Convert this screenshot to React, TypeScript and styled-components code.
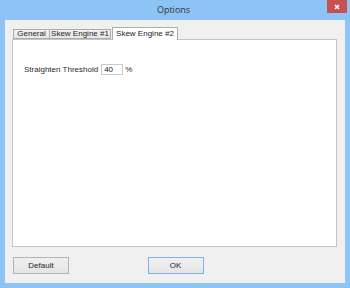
import React from "react";
import styled, { createGlobalStyle } from "styled-components";

const Global = createGlobalStyle`
  html, body { margin: 0; padding: 0; background: #8cc4f5; }
  * { box-sizing: border-box; }
`;

const Window = styled.div`
  width: 350px;
  height: 288px;
  background: #8cc4f5;
  display: flex;
  flex-direction: column;
  font-family: "Liberation Sans", Arial, sans-serif;
`;

const TitleBar = styled.div`
  height: 20px;
  display: grid;
  grid-template-columns: 1fr auto 1fr;
  align-items: start;
  padding-right: 3px;
`;

const Title = styled.div`
  grid-column: 2;
  font-family: "Open Sans", "Noto Sans", sans-serif;
  font-size: 9px;
  line-height: 20px;
  color: #333333;
`;

const CloseButton = styled.div`
  grid-column: 3;
  justify-self: end;
  width: 20px;
  height: 13px;
  background: #c75050;
  display: flex;
  align-items: center;
  justify-content: center;
`;

const Client = styled.div`
  flex: 1;
  margin: 0 5px 5px 5px;
  background: #f0f0f0;
  display: flex;
  flex-direction: column;
  padding: 7px 8px 9px 7px;
`;

const TabRow = styled.div`
  display: flex;
  align-items: flex-end;
  height: 13px;
  margin-bottom: -1px;
  padding-left: 1px;
  position: relative;
  z-index: 1;
`;

const Tab = styled.div<{ $active?: boolean; $w: number }>`
  width: ${(p) => p.$w}px;
  height: ${(p) => (p.$active ? 13 : 10)}px;
  margin-bottom: ${(p) => (p.$active ? 0 : 1)}px;
  margin-left: ${(p) => (p.$active ? 1 : 0)}px;
  border: 1px solid #acacac;
  border-bottom: ${(p) => (p.$active ? "none" : "1px solid #acacac")};
  border-right: ${(p) => (p.$active ? "1px solid #acacac" : "none")};
  background: ${(p) =>
    p.$active ? "#ffffff" : "linear-gradient(#f2f2f2, #e6e6e6)"};
  font-size: 8px;
  color: #1e1e1e;
  display: flex;
  align-items: ${(p) => (p.$active ? "flex-start" : "center")};
  justify-content: center;
  padding-top: ${(p) => (p.$active ? 2 : 0)}px;
  line-height: 8px;
  white-space: nowrap;
  &:nth-child(2) {
    border-right: 1px solid #acacac;
  }
`;

const Panel = styled.div`
  flex: 1;
  background: #ffffff;
  border: 1px solid #c4c4c4;
  padding: 24px 0 0 11px;
`;

const FieldRow = styled.div`
  display: flex;
  align-items: center;
  gap: 3px;
  font-size: 8px;
  color: #2a2a2a;
`;

const NumberBox = styled.div`
  width: 22px;
  height: 11px;
  border: 1px solid #c9c9c9;
  font-size: 8px;
  line-height: 9px;
  padding-left: 2px;
  color: #222;
  margin-right: -1px;
`;

const ButtonRow = styled.div`
  margin-top: 10px;
  display: grid;
  grid-template-columns: 1fr auto 1fr;
  padding-left: 1px;
`;

const Button = styled.div<{ $primary?: boolean }>`
  width: 56px;
  height: 17px;
  border: 1px solid ${(p) => (p.$primary ? "#7db4ea" : "#b4b4b4")};
  background: linear-gradient(#f0f0f0, #e5e5e5);
  font-size: 8px;
  color: #1e1e1e;
  display: flex;
  align-items: center;
  justify-content: center;
  &:nth-child(2) {
    margin-left: 1px;
  }
`;

export default function App() {
  return (
    <>
      <Global />
      <Window>
        <TitleBar>
          <Title>Options</Title>
          <CloseButton>
            <svg width="6" height="6" viewBox="0 0 6 6">
              <path d="M1 1 L5 5 M5 1 L1 5" stroke="#ffffff" strokeWidth="1.5" />
            </svg>
          </CloseButton>
        </TitleBar>
        <Client>
          <TabRow>
            <Tab $w={36}>General</Tab>
            <Tab $w={62}>Skew Engine #1</Tab>
            <Tab $w={66} $active>
              Skew Engine #2
            </Tab>
          </TabRow>
          <Panel>
            <FieldRow>
              <span>Straighten Threshold</span>
              <NumberBox>40</NumberBox>
              <span>%</span>
            </FieldRow>
          </Panel>
          <ButtonRow>
            <Button>Default</Button>
            <Button $primary>OK</Button>
          </ButtonRow>
        </Client>
      </Window>
    </>
  );
}
